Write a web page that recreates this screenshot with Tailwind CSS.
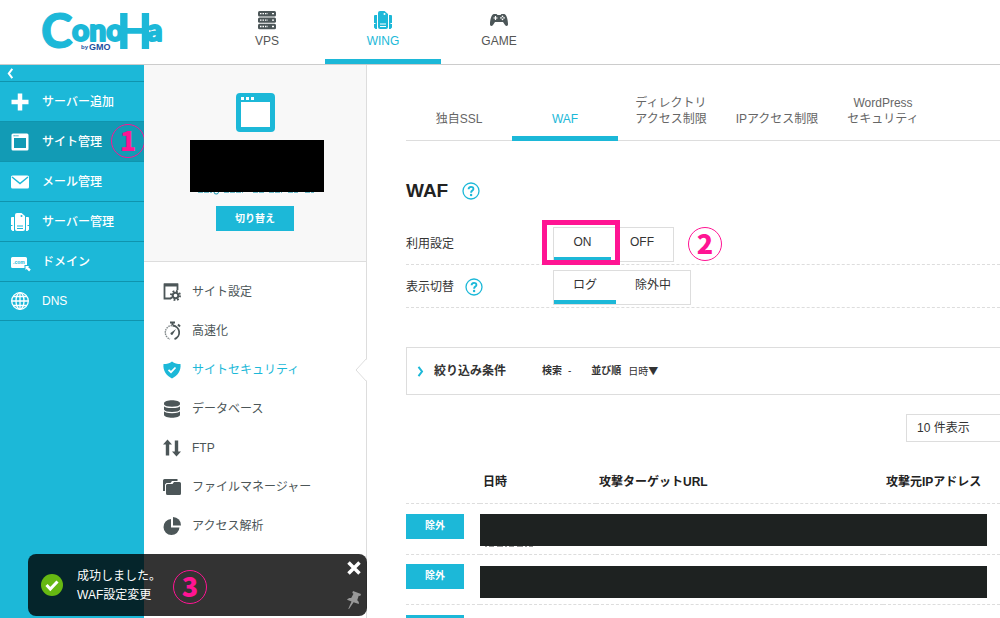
<!DOCTYPE html>
<html lang="ja">
<head>
<meta charset="utf-8">
<meta name="viewport" content="width=device-width, initial-scale=1">
<title>ConoHa WING - WAF</title>
<script src="https://cdn.jsdelivr.net/npm/@tailwindcss/browser@4"></script>
</head>
<body class="bg-white font-['Liberation_Sans','Noto_Sans_CJK_JP',sans-serif] text-xs text-[#333]">
<svg class="hidden" aria-hidden="true">
  <symbol id="wing" viewBox="0 0 20 20">
    <path fill="currentColor" d="M7 1h4.500l3.500 3v13a2 2 0 0 1-2 2H7a2 2 0 0 1-2-2V3a2 2 0 0 1 2-2z"/>
    <path fill="currentColor" d="M1.500 5H4v14H2.500L1 17.500V14h1.500v-1H1V6zM18.500 5H16v14h1.500l1.500-1.500V14h-1.500v-1H19V6z"/>
    <path d="M7 14h6M7 16.500h6" stroke="var(--cut)" stroke-width="1"/>
    <circle cx="11.500" cy="4" r="1" fill="var(--cut)"/>
  </symbol>
  <symbol id="help" viewBox="0 0 18 18">
    <circle cx="9" cy="9" r="8" fill="none" stroke="#1cb8d8" stroke-width="1.300"/>
    <path d="M6.600 7.200c0-3.100 4.800-3.100 4.800-.3 0 1.700-2.300 1.700-2.300 3.800" fill="none" stroke="#1cb8d8" stroke-width="1.900"/>
    <circle cx="9.100" cy="13" r="1.200" fill="#1cb8d8"/>
  </symbol>
</svg>
<div class="relative flex h-screen flex-col overflow-hidden">
  <header class="flex h-[65px] shrink-0 border-b border-[#ccc]">
    <a href="#" aria-label="ConoHa by GMO" class="block w-[209px] shrink-0">
      <svg class="h-16 w-[209px]" viewBox="0 0 209 64" font-family="Lato, sans-serif" font-weight="900" fill="#1cb8d8" stroke="#1cb8d8" stroke-linejoin="round">
        <text x="41" y="48" font-size="48" stroke-width="1">C</text>
        <text x="72" y="41" font-size="30" stroke-width="2">ono</text>
        <text x="117" y="49" font-size="50" font-family="Roboto, sans-serif" font-weight="700" stroke="none">H</text>
        <text x="147" y="41" font-size="30" stroke-width="2">a</text>
        <g fill="#1b4fa0" stroke="none" font-family="Liberation Sans, sans-serif" font-weight="700"><text x="81" y="49" font-size="6">by</text><text x="89" y="50" font-size="9">GMO</text></g>
      </svg>
    </a>
    <nav class="flex text-[#555]">
      <a href="#" class="flex w-[116px] flex-col items-center pt-[10px]">
        <svg class="h-5 w-5" viewBox="0 0 20 20"><g fill="#4c5658"><rect x="1" y="1" width="18" height="5.400" rx="1.500"/><rect x="1" y="7.400" width="18" height="5.400" rx="1.500"/><rect x="1" y="13.800" width="18" height="5.400" rx="1.500"/></g><g stroke="#fff" stroke-width="1.300"><path d="M3 3.700h8M3 10.100h8M3 16.500h8" stroke-dasharray="1.500 1"/><path d="M15 3.700h2M15 10.100h2M15 16.500h2"/></g></svg>
        <span class="mt-[3px] leading-4">VPS</span>
      </a>
      <a href="#" class="flex w-[116px] flex-col items-center border-b-5 border-[#1cb8d8] pt-[10px] text-[#1cb8d8] [--cut:#fff]">
        <svg class="h-5 w-5"><use href="#wing"/></svg>
        <span class="mt-[3px] leading-4">WING</span>
      </a>
      <a href="#" class="flex w-[116px] flex-col items-center pt-[10px]">
        <svg class="h-5 w-5" viewBox="0 0 20 20"><path fill="#4c5658" d="M5 4h2.500l1 1h3l1-1H15c2.500 0 4 6 4 10 0 2.500-2 2.300-3 1l-2-3H6l-2 3c-1 1.300-3 1.500-3-1C1 10 2.500 4 5 4z"/><path d="M6.500 6v4M4.500 8h4" stroke="#fff" stroke-width="1.200"/><g fill="#fff"><circle cx="13.500" cy="6.400" r=".8"/><circle cx="13.500" cy="9.400" r=".8"/><circle cx="12" cy="7.900" r=".8"/><circle cx="15" cy="7.900" r=".8"/></g></svg>
        <span class="mt-[3px] leading-4">GAME</span>
      </a>
    </nav>
  </header>

  <div class="flex min-h-0 flex-1">
    <aside class="w-36 shrink-0 bg-[#1cb8d8] font-medium text-white">
      <button type="button" aria-label="メニューを閉じる" class="flex h-4 w-full items-center pl-[6px]">
        <svg class="h-[11px] w-2" viewBox="0 0 8 11"><path d="M6.300 .8 2.800 5.500l3.500 4.700" fill="none" stroke="#fff" stroke-width="2"/></svg>
      </button>
      <nav>
        <a href="#" class="flex h-10 items-center gap-3 border-t border-[#1094ae] pl-[10px]">
          <svg class="h-5 w-5" viewBox="0 0 20 20"><path d="M10 1.500v17M1.500 10h17" stroke="#fff" stroke-width="4.500"/></svg>サーバー追加</a>
        <a href="#" class="relative flex h-10 items-center gap-3 border-t border-[#1094ae] bg-[#129bb5] pl-[10px]">
          <svg class="h-5 w-5" viewBox="0 0 20 20"><path fill="#fff" fill-rule="evenodd" d="M3 1.500h14A1.500 1.500 0 0 1 18.500 3v14a1.500 1.500 0 0 1-1.500 1.500H3A1.500 1.500 0 0 1 1.500 17V3A1.500 1.500 0 0 1 3 1.500zM4 6v10h12V6z"/><path d="M3.500 3.800h5" stroke="#129bb5" stroke-dasharray="1.300 .6"/></svg>サイト管理
          <span class="absolute top-[2px] left-[111px] flex h-[34px] w-[34px] items-center justify-center rounded-full border border-[#ff1493] pb-[3px] font-['Noto_Sans_CJK_JP',sans-serif] text-[27px] leading-none font-black text-[#ff1493]">1</span></a>
        <a href="#" class="flex h-10 items-center gap-3 border-t border-[#1094ae] pl-[10px]">
          <svg class="h-5 w-5" viewBox="0 0 20 20"><rect x="1" y="3.500" width="18" height="13" rx="1.500" fill="#fff"/><path d="m2 5 8 6.500L18 5" fill="none" stroke="#1cb8d8" stroke-width="1.500"/></svg>メール管理</a>
        <a href="#" class="flex h-10 items-center gap-3 border-t border-[#1094ae] pl-[10px] [--cut:#1cb8d8]">
          <svg class="h-5 w-5"><use href="#wing"/></svg>サーバー管理</a>
        <a href="#" class="flex h-10 items-center gap-3 border-t border-[#1094ae] pl-[10px]">
          <svg class="h-5 w-5 overflow-visible" viewBox="0 0 20 20"><path d="M2.500 5h13A1.500 1.500 0 0 1 17 6.500V13h-2.500v3h-12A1.500 1.500 0 0 1 1 14.500v-8A1.500 1.500 0 0 1 2.500 5z" fill="#fff"/><text x="3" y="12" font-size="5" font-weight="700" fill="#1cb8d8">.com</text><path d="M15.500 14h3.500l-.8 1.200 2.600 2.400-1.700 1.900-2.500-2.500-1.100 1z" fill="#fff"/></svg>ドメイン</a>
        <a href="#" class="flex h-10 items-center gap-3 border-y border-[#1094ae] pl-[10px]">
          <svg class="h-5 w-5" viewBox="0 0 20 20" fill="none" stroke="#fff" stroke-width="1.300"><circle cx="10" cy="10" r="8.300"/><ellipse cx="10" cy="10" rx="4" ry="8.300"/><path d="M10 1.700v16.600M1.700 10h16.600M3 5.500h14M3 14.500h14"/></svg>DNS</a>
      </nav>
    </aside>

    <section class="relative w-[223px] shrink-0 border-r border-[#ddd] text-[#4c5658]">
      <div class="flex flex-col items-center border-b border-[#ddd] bg-[#f8f8f8] pt-7 pb-[30px]">
        <svg class="h-[39px] w-[39px]" viewBox="0 0 39 39"><path fill="#1cb8d8" fill-rule="evenodd" d="M4 0h31a4 4 0 0 1 4 4v31a4 4 0 0 1-4 4H4a4 4 0 0 1-4-4V4a4 4 0 0 1 4-4zm1 9v25h29V9z"/><path fill="#fff" d="M5 9h29v25H5zM5 4h3v3H5zM10 4h3v3h-3zM15 4h3v3h-3z"/></svg>
        <div class="mt-2 ml-1 h-[52px] w-[134px] bg-black"></div>
        <svg class="ml-1 h-1 w-[134px]" viewBox="0 0 134 4"><path d="M8 .5h14M34 .5h19M63 .5h11M79 .5h13M98 .5h10M115 .5h9" stroke="#1795ae" stroke-dasharray="5 1" opacity=".6"/><path d="M24 0q0 2.500 3 2 1.500-.5 1.500-2" fill="none" stroke="#1795ae"/></svg>
        <button type="button" class="mt-[10px] flex h-[25px] w-[78px] items-center justify-center bg-[#1cb8d8] text-[10px] font-bold text-white">切り替え</button>
      </div>
      <nav class="flex flex-col pt-[10px] [&>a]:flex [&>a]:h-[39px] [&>a]:items-center [&>a]:gap-[10px] [&>a]:pl-[18px]">
        <a href="#"><svg class="h-5 w-5" viewBox="0 0 20 20"><path d="M9 16.500H2.500v-14h13V8" fill="none" stroke="#4c5658" stroke-width="1.800"/><path d="M2 3h14" stroke="#4c5658" stroke-width="3"/><circle cx="13.500" cy="13.500" r="2.800" fill="none" stroke="#4c5658" stroke-width="2"/><circle cx="13.500" cy="13.500" r="4.500" fill="none" stroke="#4c5658" stroke-width="2" stroke-dasharray="1.800 1.734"/></svg>サイト設定</a>
        <a href="#"><svg class="h-5 w-5" viewBox="0 0 20 20"><path d="M10.500 4.500a7 7 0 0 1 2 13.600" fill="none" stroke="#4c5658" stroke-width="1.800"/><path d="M10 4.500a7 7 0 0 0-2 13.600" fill="none" stroke="#4c5658" stroke-width="1.400" stroke-dasharray="1.500 .8" opacity=".7"/><path d="M8 1.500h5M10.500 1v3M16 3.500l2 2" stroke="#4c5658" stroke-width="2"/><path d="m8.500 12 5.500-4-3.500 5.800a1.500 1.500 0 0 1-2-1.800z" fill="#4c5658"/></svg>高速化</a>
        <a href="#" class="text-[#1cb8d8]"><svg class="h-5 w-5" viewBox="0 0 20 20"><path d="M10 1.500c2.500 2 5 2.500 8.500 2.500.8 7-3 11.500-8.500 14.500C4.500 15.500.7 11 1.500 4c3.500 0 6-.5 8.500-2.500z" fill="#1cb8d8"/><path d="m6.500 9.800 2.500 2.400 4.500-4.700" fill="none" stroke="#fff" stroke-width="1.800"/></svg>サイトセキュリティ</a>
        <a href="#"><svg class="h-5 w-5" viewBox="0 0 20 20"><path fill="#4c5658" d="M2 4.200C2 .3 18 .3 18 4.200v11.600c0 3.900-16 3.900-16 0z"/><path d="M1.500 5.800c2 3.400 15 3.400 17 0M1.500 11c2 3.400 15 3.400 17 0" fill="none" stroke="#fff" stroke-width="1.300"/></svg>データベース</a>
        <a href="#"><svg class="h-5 w-5" viewBox="0 0 20 20" fill="#4c5658"><path d="M5.500 1.500 10 6.500H7.200v11H3.800v-11H1zM14.500 18.500l-4.500-5h2.800v-11h3.400v11H19z"/></svg>FTP</a>
        <a href="#"><svg class="h-5 w-5" viewBox="0 0 20 20"><path d="M1 14V3.500A1.500 1.500 0 0 1 2.500 2h13v2H10L8.500 6H4.500L3 7.500V14z" fill="#4c5658"/><path d="M5.500 7h5L12 5h5.500A1.500 1.500 0 0 1 19 6.500v10a1.500 1.500 0 0 1-1.500 1.500h-12A1.500 1.500 0 0 1 4 16.500v-8A1.500 1.500 0 0 1 5.500 7z" fill="#4c5658"/></svg>ファイルマネージャー</a>
        <a href="#"><svg class="h-5 w-5" viewBox="0 0 20 20" fill="#4c5658"><path d="M9 3v8.500h8.500A8 8 0 1 1 9 3z"/><path d="M11 1a8 8 0 0 1 8 8.500h-8z"/></svg>アクセス解析</a>
      </nav>
      <svg class="absolute top-[293px] -right-px h-6 w-3" viewBox="0 0 12 24"><path d="M12 1 1 12l11 11z" fill="#fff"/><path d="M11.500 .5 1 12l10.500 11.500" fill="none" stroke="#ddd"/></svg>
    </section>

    <main class="min-w-0 flex-1 pt-[29px] pl-[39px]">
      <nav class="flex h-[47px] items-end border-b border-[#ddd] text-center leading-4 text-[#666]">
        <a href="#" class="w-[106px] pb-[13px]">独自SSL</a>
        <a href="#" class="-mb-px w-[106px] border-b-5 border-[#1cb8d8] pb-[9px] text-[#1cb8d8]">WAF</a>
        <a href="#" class="flex w-[106px] justify-center pb-[13px]"><span class="text-left">ディレクトリ<br>アクセス制限</span></a>
        <a href="#" class="w-[106px] pb-[13px]">IPアクセス制限</a>
        <a href="#" class="w-[106px] pb-[13px]">WordPress<br>セキュリティ</a>
      </nav>
      <div class="flex h-[81px] items-center gap-[14px] pt-[18px]">
        <h1 class="text-[19px] font-bold text-[#222]">WAF</h1>
        <button type="button" aria-label="ヘルプ"><svg class="h-[18px] w-[18px]"><use href="#help"/></svg></button>
      </div>
      <div class="flex h-[43px] items-center border-b border-dashed border-[#ddd] pt-[2px]">
        <div class="w-[147px]">利用設定</div>
        <div class="relative flex h-[35px] border border-[#ddd]">
          <button type="button" class="w-[57px] border-b-4 border-[#1cb8d8]">ON</button>
          <button type="button" class="w-[62px] pb-1">OFF</button>
          <span class="pointer-events-none absolute -top-2 -left-3 h-[45px] w-[78px] border-5 border-[#ff1493]"></span>
        </div>
        <span class="ml-[14px] flex h-[34px] w-[34px] items-center justify-center rounded-full border border-[#ff1493] pb-[3px] font-['Noto_Sans_CJK_JP',sans-serif] text-[27px] leading-none font-black text-[#ff1493]">2</span>
      </div>
      <div class="flex h-[43px] items-center border-b border-dashed border-[#ddd] pt-[2px]">
        <div class="flex w-[147px] items-center gap-[11px]">表示切替 <button type="button" aria-label="ヘルプ"><svg class="h-[18px] w-[18px]"><use href="#help"/></svg></button></div>
        <div class="flex h-[35px] border border-[#ddd]">
          <button type="button" class="w-[62px] border-b-4 border-[#1cb8d8]">ログ</button>
          <button type="button" class="w-[74px] pb-1">除外中</button>
        </div>
      </div>
      <button type="button" class="mt-[39px] flex h-12 w-full items-center border border-r-0 border-[#ddd] pl-[10px] text-left text-[10px]">
        <svg class="h-[11px] w-2" viewBox="0 0 8 11"><path d="m1.500 .8 3.500 4.700-3.500 4.700" fill="none" stroke="#1cb8d8" stroke-width="2"/></svg>
        <span class="ml-[9px] w-[108px] text-xs font-bold">絞り込み条件</span>
        <b class="mr-[6px]">検索</b>-
        <b class="mr-[7px] ml-5">並び順</b><span class="font-['Noto_Sans_CJK_JP',sans-serif]">日時▼</span>
      </button>
      <div class="mt-[19px] flex justify-end">
        <select aria-label="表示件数" class="h-[28px] w-[94px] appearance-none rounded-none border border-r-0 border-[#ddd] bg-white pl-[10px] text-xs"><option>10 件表示</option></select>
      </div>
      <table class="w-full table-fixed border-collapse text-left">
        <colgroup><col class="w-[74px]"><col class="w-[116px]"><col><col class="w-[117px]"></colgroup>
        <thead>
          <tr class="h-[61px] border-b border-dashed border-[#ddd] text-[#222]">
            <td class="p-0"></td>
            <th scope="col" class="pt-5 pl-[3px] font-bold">日時</th>
            <th scope="col" class="pt-5 pl-[3px] font-bold">攻撃ターゲットURL</th>
            <th scope="col" class="pt-5 pl-[3px] font-bold whitespace-nowrap">攻撃元IPアドレス</th>
          </tr>
        </thead>
        <tbody>
          <tr class="h-[51px] border-b border-dashed border-[#ddd]">
            <td class="pt-[10px] align-top"><button type="button" class="block h-[25px] w-[58px] bg-[#1cb8d8] text-[10px] font-bold text-white">除外</button></td>
            <td colspan="3" class="pt-[10px] pr-[13px] align-top"><div class="h-[32px] bg-[#1e2221]"></div><svg class="h-px w-[60px]" viewBox="0 0 60 1"><path d="M5 .5h48" stroke="#999" stroke-dasharray="2 2 5 3 6 2"/></svg></td>
          </tr>
          <tr class="h-[50px] border-b border-dashed border-[#ddd]">
            <td class="pt-[9px] align-top"><button type="button" class="block h-[25px] w-[58px] bg-[#1cb8d8] text-[10px] font-bold text-white">除外</button></td>
            <td colspan="3" class="pt-[11px] pr-[13px] align-top"><div class="h-[32px] bg-[#1e2221]"></div></td>
          </tr>
          <tr>
            <td class="pt-[10px] align-top"><button type="button" aria-label="除外" class="block h-[25px] w-[58px] bg-[#1cb8d8]"></button></td>
            <td colspan="3"></td>
          </tr>
        </tbody>
      </table>
    </main>
  </div>

  <div role="status" class="absolute bottom-[2px] left-7 flex h-[62px] w-[339px] items-center rounded-lg bg-black/80 pl-3 text-white">
    <svg class="h-6 w-6" viewBox="0 0 24 24"><circle cx="12" cy="12" r="11" fill="#66b812"/><path d="m6.500 12 3.800 4 7.200-7.500" fill="none" stroke="#fff" stroke-width="3"/></svg>
    <p class="ml-[13px] pt-[2px] leading-[19px]">成功しました。<br>WAF設定変更</p>
    <span class="mt-1 ml-3 flex h-[34px] w-[34px] items-center justify-center rounded-full border border-[#ff1493] pb-[3px] font-['Noto_Sans_CJK_JP',sans-serif] text-[27px] leading-none font-black text-[#ff1493]">3</span>
    <div class="mr-[5px] ml-auto flex flex-col items-center gap-[14px]">
      <button type="button" aria-label="閉じる"><svg class="h-4 w-4" viewBox="0 0 16 16"><path d="m2.500 2.500 11 11m0-11-11 11" stroke="#fff" stroke-width="3.500"/></svg></button>
      <button type="button" aria-label="固定"><svg class="h-5 w-4" viewBox="0 0 16 20"><path d="m7 1 8 3-.8 2-1.500-.3-1.500 4.500c1.500 1 2 2.200 1.600 3.800L7.600 12.300 3 19l-.7-.3L5.500 11.500 1 9.700c1-1.500 2.400-2 4.200-1.700L7.500 3.800 6.300 3z" fill="#999"/></svg></button>
    </div>
  </div>
</div>
</body>
</html>
